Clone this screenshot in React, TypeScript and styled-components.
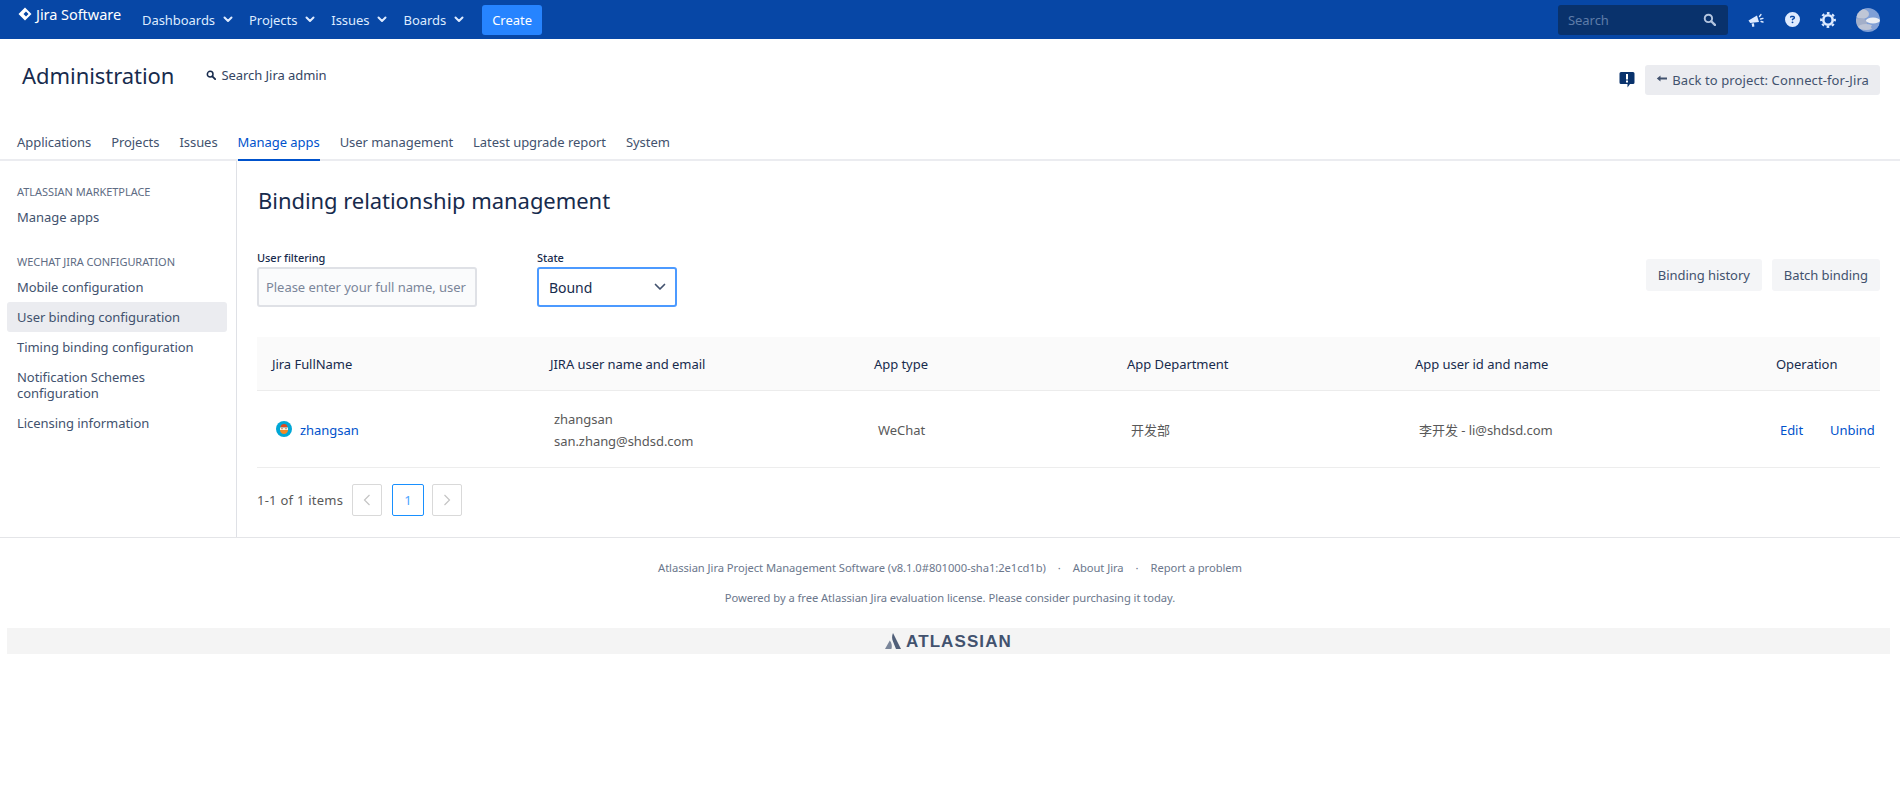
import React from 'react';
import styled, { createGlobalStyle } from 'styled-components';
import { FaCircleQuestion } from 'react-icons/fa6';

const GlobalStyle = createGlobalStyle`
  html, body {
    margin: 0;
    background: #fff;
    font-family: "Noto Sans", "Noto Sans CJK SC", sans-serif;
  }
`;

const Page = styled.div`
  width: 1900px;
  height: 800px;
  overflow: hidden;
  color: #42526e;
  font-size: 13px;
  letter-spacing: -0.05px;
`;

const TopBar = styled.header`
  display: flex;
  align-items: center;
  height: 39px;
  background: #0747a6;
  padding: 0 20px 0 18px;
  color: #deebff;
`;

const Logo = styled.div`
  display: flex;
  align-items: center;
  gap: 4px;
  width: 124px;
  margin-bottom: 12px;
  color: #fff;
  font-size: 14.5px;
  white-space: nowrap;
`;

const TopItem = styled.div`
  display: flex;
  align-items: center;
  gap: 8px;
  margin-right: 16px;
`;

const CreateButton = styled.button`
  width: 60px;
  height: 30px;
  margin-left: 2px;
  border: 0;
  border-radius: 3px;
  background: #2684ff;
  color: #fff;
  font: inherit;
`;

const TopRight = styled.div`
  display: flex;
  align-items: center;
  margin-left: auto;
`;

const SearchBox = styled.div`
  display: flex;
  align-items: center;
  justify-content: space-between;
  width: 170px;
  height: 30px;
  padding: 0 12px 0 10px;
  margin-right: 20px;
  box-sizing: border-box;
  border-radius: 3px;
  background: #09326c;
  color: #5e7ca8;
`;

const TopIcon = styled.span`
  display: flex;
  justify-content: center;
  width: 16px;
  margin-right: 20px;
  color: #deebff;
  font-size: 15px;
`;

const AdminHeader = styled.div`
  display: flex;
  align-items: center;
  height: 73px;
  padding: 0 20px 2px 22px;
  box-sizing: border-box;
`;

const AdminTitle = styled.h1`
  margin: 0 32px 0 0;
  color: #172b4d;
  font-size: 22px;
  font-weight: 400;
`;

const AdminSearch = styled.div`
  display: flex;
  align-items: center;
  gap: 5px;
  color: #344563;
`;

const BackGroup = styled.div`
  display: flex;
  align-items: center;
  gap: 10px;
  margin-left: auto;
  margin-top: 10px;
`;

const BackButton = styled.div`
  display: flex;
  align-items: center;
  gap: 4px;
  height: 30px;
  padding: 0 11px;
  border-radius: 3px;
  background: #ebecf0;
  color: #42526e;
  letter-spacing: 0.1px;
`;

const Tabs = styled.nav`
  display: flex;
  gap: 20px;
  height: 49px;
  padding-left: 17px;
  box-sizing: border-box;
  border-bottom: 2px solid #ebecf0;
`;

const Tab = styled.div<{ $active?: boolean }>`
  height: 49px;
  box-sizing: border-box;
  padding-top: 21px;
  color: ${({ $active }) => ($active ? '#0052cc' : '#42526e')};
  border-bottom: 2px solid ${({ $active }) => ($active ? '#0052cc' : 'transparent')};
`;

const Body = styled.div`
  display: flex;
  height: 376px;
  border-bottom: 1px solid #e4e5e8;
`;

const Sidebar = styled.aside`
  width: 237px;
  flex: none;
  box-sizing: border-box;
  padding: 23px 9px 0 7px;
  border-right: 1px solid #dfe1e6;
`;

const SideHeading = styled.div`
  margin: 0 0 2px 10px;
  height: 16px;
  line-height: 16px;
  color: #5e6c84;
  font-size: 11px;
`;

const SideGroup = styled.div`
  margin-bottom: 22px;
`;

const SideItem = styled.div<{ $active?: boolean }>`
  padding: 7px 10px;
  line-height: 16px;
  border-radius: 3px;
  background: ${({ $active }) => ($active ? '#ebecf0' : 'transparent')};
`;

const Main = styled.main`
  flex: 1;
  padding: 0 20px;
`;

const PageTitle = styled.h2`
  margin: 20px 0 0 1px;
  height: 38px;
  line-height: 38px;
  color: #172b4d;
  font-size: 22px;
  font-weight: 400;
`;

const FilterRow = styled.div`
  display: flex;
  align-items: flex-end;
  gap: 60px;
  margin-top: 31px;
`;

const Field = styled.div`
  display: flex;
  flex-direction: column;
  gap: 2px;
  color: #172b4d;
  font-size: 11px;
  font-weight: 500;
`;

const TextBox = styled.div`
  width: 220px;
  height: 40px;
  box-sizing: border-box;
  padding: 0 7px;
  line-height: 36px;
  overflow: hidden;
  white-space: nowrap;
  border: 2px solid #dfe1e6;
  border-radius: 3px;
  background: #fafbfc;
  color: #7a869a;
  font-size: 13px;
  font-weight: 400;
`;

const SelectBox = styled.div`
  display: flex;
  align-items: center;
  justify-content: space-between;
  width: 140px;
  height: 40px;
  box-sizing: border-box;
  padding: 0 9px 0 10px;
  border: 2px solid #4c9aff;
  border-radius: 3px;
  color: #172b4d;
  font-size: 14px;
  font-weight: 400;
`;

const Actions = styled.div`
  display: flex;
  gap: 10px;
  margin-left: auto;
  margin-bottom: 16px;
`;

const ActionButton = styled.div`
  height: 32px;
  padding: 0 12px;
  line-height: 32px;
  border-radius: 3px;
  background: #f4f5f7;
`;

const Table = styled.div`
  margin-top: 30px;
  display: grid;
  grid-template-columns: 278px 324px 253px 288px 361px 119px;
`;

const HeadCell = styled.div`
  display: flex;
  align-items: center;
  height: 54px;
  box-sizing: border-box;
  padding-left: 15px;
  background: #fafafa;
  border-bottom: 1px solid #ececec;
  color: #172b4d;
`;

const RowCell = styled.div`
  display: flex;
  flex-direction: column;
  justify-content: center;
  gap: 4px;
  height: 77px;
  box-sizing: border-box;
  padding: 2px 0 0 19px;
  border-bottom: 1px solid #ededed;
  color: #595959;
  line-height: 18px;
`;

const NameCell = styled(RowCell)`
  flex-direction: row;
  justify-content: flex-start;
  align-items: center;
  gap: 8px;
`;

const OperationCell = styled(RowCell)`
  flex-direction: row;
  justify-content: flex-start;
  align-items: center;
  gap: 27px;
`;

const LinkText = styled.span`
  color: #0052cc;
`;

const Pager = styled.div`
  display: flex;
  align-items: center;
  gap: 10px;
  margin-top: 16px;
  color: #595959;
`;

const PagerLabel = styled.span`
  width: 85px;
  letter-spacing: 0.25px;
  white-space: nowrap;
`;

const PageButton = styled.div<{ $current?: boolean }>`
  display: flex;
  align-items: center;
  justify-content: center;
  width: ${({ $current }) => ($current ? '32px' : '30px')};
  height: 32px;
  margin-right: ${({ $current }) => ($current ? '-2px' : '0')};
  box-sizing: border-box;
  border: 1px solid ${({ $current }) => ($current ? '#1890ff' : '#d9d9d9')};
  border-radius: 2px;
  color: #4da3ff;
`;

const Footer = styled.footer`
  display: flex;
  flex-direction: column;
  align-items: center;
  color: #6b778c;
  font-size: 11.2px;
`;

const FooterLinks = styled.div`
  display: flex;
  gap: 12px;
  margin-top: 21px;
  line-height: 18px;
`;

const FooterNote = styled.div`
  margin-top: 12px;
  line-height: 18px;
`;

const LogoBand = styled.div`
  display: flex;
  align-items: center;
  justify-content: center;
  gap: 5px;
  align-self: stretch;
  height: 26px;
  padding-top: 1px;
  box-sizing: border-box;
  margin: 21px 10px 0 7px;
  background: #f4f4f4;
  color: #42526e;
  font-family: "Liberation Sans", sans-serif;
  font-size: 17px;
  font-weight: 700;
  letter-spacing: 1.1px;
`;

const FaceImage = styled.svg`
  flex: none;
  margin-bottom: 3px;
`;

const Chevron = () => (
  <svg width="10" height="8" viewBox="0 0 10 8">
    <path d="M1.5 1.5 5 5l3.5-3.5" fill="none" stroke="currentColor" strokeWidth="2" strokeLinecap="round" strokeLinejoin="round" />
  </svg>
);

const SelectChevron = () => (
  <svg width="12" height="8" viewBox="0 0 12 8">
    <path d="M1.500 1.500 6 6l4.500-4.500" fill="none" stroke="#42526e" strokeWidth="1.700" strokeLinecap="round" strokeLinejoin="round" />
  </svg>
);

const Magnifier = ({ size = 12, color = '#172b4d' }: { size?: number; color?: string }) => (
  <svg width={size} height={size} viewBox="0 0 12 12">
    <circle cx="5" cy="5" r="3.4" fill="none" stroke={color} strokeWidth="1.8" />
    <path d="M7.6 7.6 11 11" stroke={color} strokeWidth="2.2" strokeLinecap="round" />
  </svg>
);

const Megaphone = () => (
  <svg width="16" height="16" viewBox="0 0 16 16" fill="currentColor">
    <path d="M.5 8.500 9 3.500l2 6.500-8.800 1z" />
    <path d="M3.500 11.500 6 11.200l.4 3.300-2 .5z" />
    <path d="M11.500 4.500 13 2.500M12.500 7 15 6.300M13 9.500l2 .5" fill="none" stroke="currentColor" strokeWidth="1.300" strokeLinecap="round" />
  </svg>
);

const Gear = () => (
  <svg width="16" height="16" viewBox="0 0 16 16">
    <circle cx="8" cy="8" r="4.700" fill="none" stroke="currentColor" strokeWidth="2.600" />
    <circle cx="8" cy="8" r="6.900" fill="none" stroke="currentColor" strokeWidth="2" strokeDasharray="2.700 2.720" strokeDashoffset="1.350" />
  </svg>
);

const CloudAvatar = () => (
  <svg width="24" height="24" viewBox="0 0 24 24">
    <defs>
      <clipPath id="cloud-clip">
        <circle cx="12" cy="12" r="12" />
      </clipPath>
    </defs>
    <g clipPath="url(#cloud-clip)">
      <rect width="24" height="24" fill="#7f9fd6" />
      <ellipse cx="6" cy="6" rx="7" ry="5" fill="#bfc6d6" />
      <ellipse cx="4" cy="15" rx="7" ry="5" fill="#a3afc9" />
      <ellipse cx="17" cy="12.500" rx="7" ry="3" fill="#eceef3" />
      <ellipse cx="10" cy="19" rx="8" ry="3" fill="#bcc4d6" />
      <ellipse cx="20" cy="19" rx="5" ry="3" fill="#86a2d6" />
    </g>
  </svg>
);

const FaceAvatar = () => (
  <FaceImage width="16" height="16" viewBox="0 0 16 16">
    <circle cx="8" cy="8" r="8" fill="#00a7d6" />
    <path d="M4.500 6.500a3.500 3.500 0 0 1 7 0z" fill="#de4a1f" />
    <rect x="4" y="6.500" width="8" height="2.500" fill="#fff1dc" />
    <path d="M4 9h8c0 2.200-1.600 4-4 4s-4-1.800-4-4z" fill="#f08a24" />
    <rect x="5.500" y="7.200" width="1" height="1" fill="#5a3a1e" />
    <rect x="9.500" y="7.200" width="1" height="1" fill="#5a3a1e" />
  </FaceImage>
);

const AtlassianMark = () => (
  <svg width="16" height="17" viewBox="0 0 16 17">
    <path d="M8 0C6.700 3 6.800 6 8.200 9l2.800 7H16z" fill="#505f79" />
    <path d="M4.800 7.500 0 16h6.400c.9-2.700.5-5.800-1.600-8.500z" fill="#7a869a" />
  </svg>
);

export default function App() {
  const columns = ['Jira FullName', 'JIRA user name and email', 'App type', 'App Department', 'App user id and name', 'Operation'];

  return (
    <Page>
      <GlobalStyle />
      <TopBar>
        <Logo>
          <svg width="14" height="14" viewBox="0 0 14 14">
            <path d="M7 .5 13.500 7 7 13.500.5 7zM8 4.500 5.500 7 8 9.500 10.500 7z" fill="#fff" fillRule="evenodd" />
          </svg>
          Jira Software
        </Logo>
        <TopItem>Dashboards <Chevron /></TopItem>
        <TopItem>Projects <Chevron /></TopItem>
        <TopItem>Issues <Chevron /></TopItem>
        <TopItem>Boards <Chevron /></TopItem>
        <CreateButton>Create</CreateButton>
        <TopRight>
          <SearchBox>
            Search
            <Magnifier size={13} color="#b3c5df" />
          </SearchBox>
          <TopIcon><Megaphone /></TopIcon>
          <TopIcon><FaCircleQuestion /></TopIcon>
          <TopIcon><Gear /></TopIcon>
          <CloudAvatar />
        </TopRight>
      </TopBar>

      <AdminHeader>
        <AdminTitle>Administration</AdminTitle>
        <AdminSearch>
          <Magnifier size={10} />
          Search Jira admin
        </AdminSearch>
        <BackGroup>
          <svg width="16" height="18" viewBox="0 0 16 18">
            <path d="M2 1h12a1.500 1.500 0 0 1 1.500 1.500v9A1.500 1.500 0 0 1 14 13h-3l-2.500 3.500V13H2A1.500 1.500 0 0 1 .5 11.500v-9A1.500 1.500 0 0 1 2 1z" fill="#09326c" />
            <rect x="7" y="3" width="2" height="5.500" fill="#fff" />
            <rect x="7" y="9.500" width="2" height="2" fill="#fff" />
          </svg>
          <BackButton>
            <svg width="12" height="10" viewBox="0 0 12 10">
              <path d="M4.500 .5 .8 3.500 4.500 6.500V4.600H11V2.400H4.500z" fill="#42526e" />
            </svg>
            Back to project: Connect-for-Jira
          </BackButton>
        </BackGroup>
      </AdminHeader>

      <Tabs>
        <Tab>Applications</Tab>
        <Tab>Projects</Tab>
        <Tab>Issues</Tab>
        <Tab $active>Manage apps</Tab>
        <Tab>User management</Tab>
        <Tab>Latest upgrade report</Tab>
        <Tab>System</Tab>
      </Tabs>

      <Body>
        <Sidebar>
          <SideGroup>
            <SideHeading>ATLASSIAN MARKETPLACE</SideHeading>
            <SideItem>Manage apps</SideItem>
          </SideGroup>
          <SideGroup>
            <SideHeading>WECHAT JIRA CONFIGURATION</SideHeading>
            <SideItem>Mobile configuration</SideItem>
            <SideItem $active>User binding configuration</SideItem>
            <SideItem>Timing binding configuration</SideItem>
            <SideItem>Notification Schemes configuration</SideItem>
            <SideItem>Licensing information</SideItem>
          </SideGroup>
        </Sidebar>

        <Main>
          <PageTitle>Binding relationship management</PageTitle>
          <FilterRow>
            <Field>
              User filtering
              <TextBox>Please enter your full name, user</TextBox>
            </Field>
            <Field>
              State
              <SelectBox>
                Bound
                <SelectChevron />
              </SelectBox>
            </Field>
            <Actions>
              <ActionButton>Binding history</ActionButton>
              <ActionButton>Batch binding</ActionButton>
            </Actions>
          </FilterRow>

          <Table>
            {columns.map((column) => (
              <HeadCell key={column}>{column}</HeadCell>
            ))}
            <NameCell>
              <FaceAvatar />
              <LinkText>zhangsan</LinkText>
            </NameCell>
            <RowCell>
              <span>zhangsan</span>
              <span>san.zhang@shdsd.com</span>
            </RowCell>
            <RowCell>WeChat</RowCell>
            <RowCell>开发部</RowCell>
            <RowCell>李开发 - li@shdsd.com</RowCell>
            <OperationCell>
              <LinkText>Edit</LinkText>
              <LinkText>Unbind</LinkText>
            </OperationCell>
          </Table>

          <Pager>
            <PagerLabel>1-1 of 1 items</PagerLabel>
            <PageButton>
              <svg width="8" height="12" viewBox="0 0 8 12">
                <path d="M6.500 1 1.500 6l5 5" fill="none" stroke="#c4c4c4" strokeWidth="1.200" />
              </svg>
            </PageButton>
            <PageButton $current>1</PageButton>
            <PageButton>
              <svg width="8" height="12" viewBox="0 0 8 12">
                <path d="M1.500 1 6.500 6l-5 5" fill="none" stroke="#c4c4c4" strokeWidth="1.200" />
              </svg>
            </PageButton>
          </Pager>
        </Main>
      </Body>

      <Footer>
        <FooterLinks>
          <span>Atlassian Jira Project Management Software (v8.1.0#801000-sha1:2e1cd1b)</span>
          <span>·</span>
          <span>About Jira</span>
          <span>·</span>
          <span>Report a problem</span>
        </FooterLinks>
        <FooterNote>Powered by a free Atlassian Jira evaluation license. Please consider purchasing it today.</FooterNote>
        <LogoBand>
          <AtlassianMark />
          ATLASSIAN
        </LogoBand>
      </Footer>
    </Page>
  );
}
